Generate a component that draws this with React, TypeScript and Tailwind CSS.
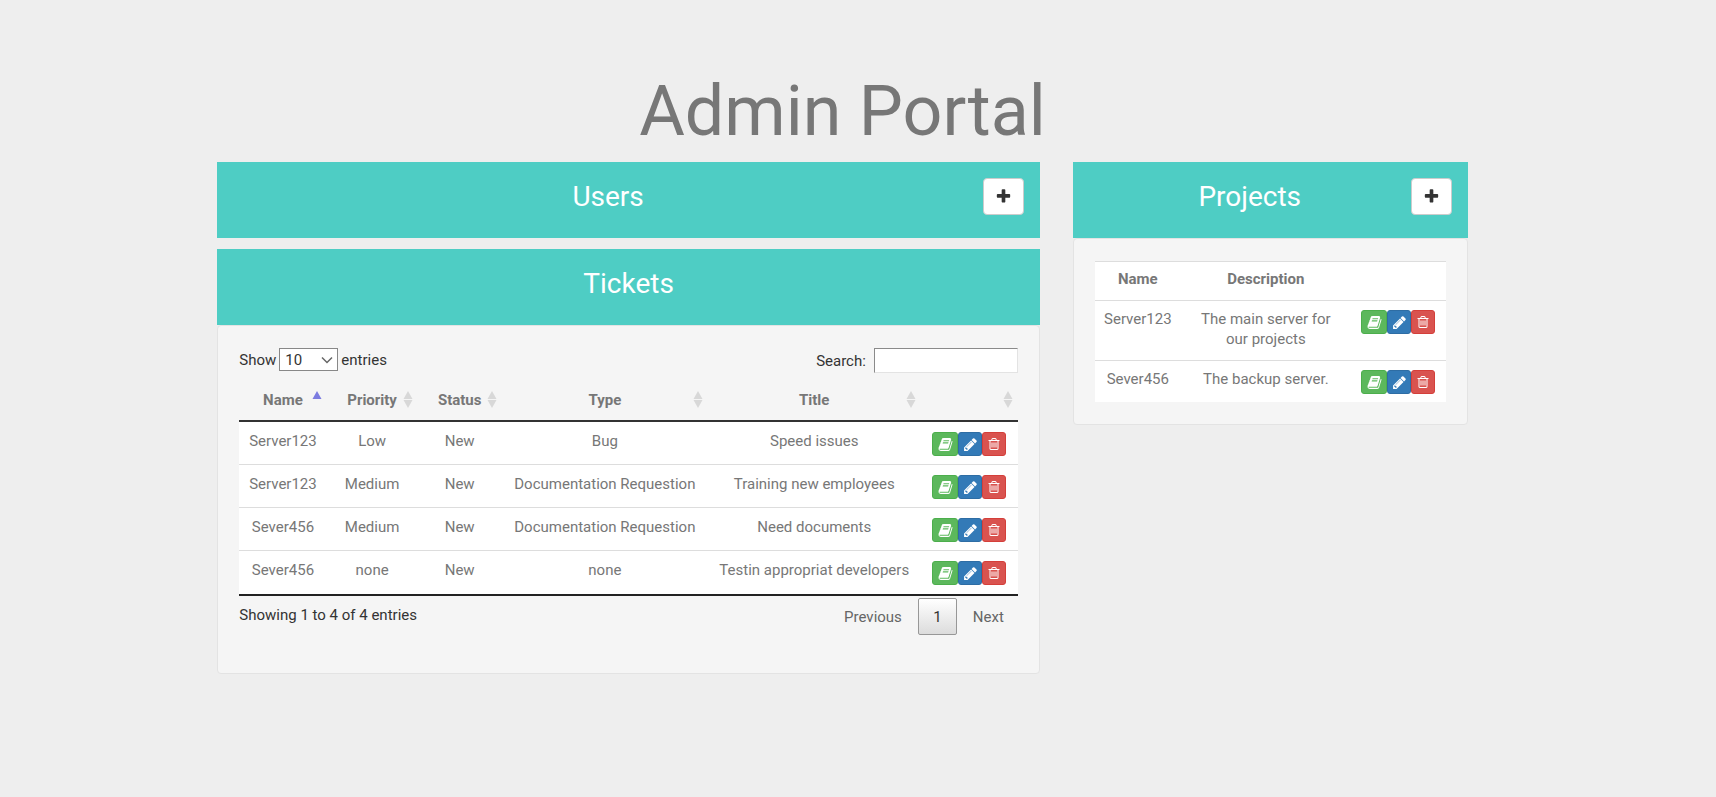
import { useState, type ReactNode } from "react";

const BOOK =
  "M1703 478q40 57 18 129l-275 906q-19 64-76.5 107.5t-122.5 43.5h-923q-77 0-148.5-53.5t-99.5-131.5q-24-67-2-127 0-4 3-27t4-37q1-8-3-21.5t-3-19.5q2-11 8-21t16.5-23.5 16.5-23.5q23-38 45-91.5t30-91.5q3-10 .5-30t-.5-28q3-11 17-28t17-23q21-36 42-92t25-90q1-9-2.5-32t.5-28q4-13 22-30.5t22-22.5q19-26 42.5-84.5t27.5-96.5q1-8-3-25.5t-2-26.5q2-8 9-18t18-23 17-21q8-12 16.5-30.5t15-35 16-36 19.5-32 26.5-23.5 36-11.5 47.5 5.5l-1 3q38-9 51-9h761q74 0 114 56t18 130l-274 906q-36 119-71.5 153.5t-128.5 34.5h-869q-27 0-38 15-11 16-1 43 24 70 144 70h923q29 0 56-15.5t35-41.5l300-987q7-22 5-57 38 15 59 43zm-1064 2q-4 13 2 22.5t20 9.5h608q13 0 25.5-9.5t16.5-22.5l21-64q4-13-2-22.5t-20-9.5h-608q-13 0-25.5 9.5t-16.5 22.5zm-83 256q-4 13 2 22.5t20 9.5h608q13 0 25.5-9.5t16.5-22.5l21-64q4-13-2-22.5t-20-9.5h-608q-13 0-25.5 9.5t-16.5 22.5z";
const PENCIL =
  "M491 1536l91-91-235-235-91 91v107h128v128h107zm523-928q0-22-22-22-10 0-17 7l-542 542q-7 7-7 17 0 22 22 22 10 0 17-7l542-542q7-7 7-17zm-54-192l416 416-832 832h-416v-416zm683 96q0 53-37 90l-166 166-416-416 166-165q36-38 90-38 53 0 91 38l235 234q37 39 37 91z";
const TRASH =
  "M704 736v576q0 14-9 23t-23 9h-64q-14 0-23-9t-9-23v-576q0-14 9-23t23-9h64q14 0 23 9t9 23zm256 0v576q0 14-9 23t-23 9h-64q-14 0-23-9t-9-23v-576q0-14 9-23t23-9h64q14 0 23 9t9 23zm256 0v576q0 14-9 23t-23 9h-64q-14 0-23-9t-9-23v-576q0-14 9-23t23-9h64q14 0 23 9t9 23zm128 724v-948h-896v948q0 22 7 40.5t14.5 27 10.5 8.5h832q3 0 10.5-8.5t14.5-27 7-40.5zm-672-1076h448l-48-117q-7-9-17-11h-317q-10 2-17 11zm928 32v64q0 14-9 23t-23 9h-96v948q0 83-47 143.5t-113 60.5h-832q-66 0-113-58.5t-47-141.5v-952h-96q-14 0-23-9t-9-23v-64q0-14 9-23t23-9h309l70-167q15-37 54-63t79-26h320q40 0 79 26t54 63l70 167h309q14 0 23 9t9 23z";
const PLUS =
  "M1600 736v192q0 40-28 68t-68 28h-416v416q0 40-28 68t-68 28h-192q-40 0-68-28t-28-68v-416h-416q-40 0-68-28t-28-68v-192q0-40 28-68t68-28h416v-416q0-40 28-68t68-28h192q40 0 68 28t28 68v416h416q40 0 68 28t28 68z";

function Icon({ d, className }: { d: string; className: string }) {
  return (
    <svg viewBox="0 0 1792 1792" className={className} fill="currentColor" aria-hidden="true">
      <path d={d} />
    </svg>
  );
}

function Actions({ name }: { name: string }) {
  return (
    <div className="flex justify-center">
      <button
        type="button"
        aria-label={`View ${name}`}
        className="flex h-6 w-[26px] items-center justify-center rounded-[3px] border border-[#4cae4c] bg-[#5cb85c] text-white"
      >
        <Icon d={BOOK} className="size-[15px]" />
      </button>
      <button
        type="button"
        aria-label={`Edit ${name}`}
        className="flex h-6 w-6 items-center justify-center rounded-[3px] border border-[#2e6da4] bg-[#337ab7] text-white"
      >
        <Icon d={PENCIL} className="size-[15px]" />
      </button>
      <button
        type="button"
        aria-label={`Delete ${name}`}
        className="flex h-6 w-6 items-center justify-center rounded-[3px] border border-[#d43f3a] bg-[#d9534f] text-white"
      >
        <Icon d={TRASH} className="size-3.5" />
      </button>
    </div>
  );
}

function PanelHeader({ title, addLabel }: { title: string; addLabel?: string }) {
  return (
    <div className="flex h-[76px] items-start bg-[#4ecdc4] px-4 pt-4">
      <h2 className="flex-1 text-center text-[28px] leading-[38px] font-normal text-white">{title}</h2>
      {addLabel && (
        <button
          type="button"
          aria-label={addLabel}
          className="flex h-[37px] w-[41px] items-center justify-center rounded border border-[#ccc] bg-white text-[#333]"
        >
          <Icon d={PLUS} className="size-[17px]" />
        </button>
      )}
    </div>
  );
}

function PanelBody({ children }: { children: ReactNode }) {
  return <div className="rounded border border-[#e3e3e3] bg-[#f5f5f5] px-[21px]">{children}</div>;
}

function SortMark({ active }: { active: boolean }) {
  return (
    <svg viewBox="0 0 10 17" className="absolute top-2 right-[5px] h-[17px] w-2.5" aria-hidden="true">
      <path d="M5 0 9.5 8h-9z" fill={active ? "#7c7ce0" : "#d8d8d8"} />
      {!active && <path d="M5 17 9.5 9h-9z" fill="#d8d8d8" />}
    </svg>
  );
}

const columns = [
  { label: "Name", width: "w-[11.2%]" },
  { label: "Priority", width: "w-[11.7%]" },
  { label: "Status", width: "w-[10.8%]" },
  { label: "Type", width: "w-[26.5%]" },
  { label: "Title", width: "w-[27.3%]" },
  { label: "", width: "w-[12.5%]" },
];

const tickets = [
  ["Server123", "Low", "New", "Bug", "Speed issues"],
  ["Server123", "Medium", "New", "Documentation Requestion", "Training new employees"],
  ["Sever456", "Medium", "New", "Documentation Requestion", "Need documents"],
  ["Sever456", "none", "New", "none", "Testin appropriat developers"],
];

const projects = [
  ["Server123", "The main server for our projects"],
  ["Sever456", "The backup server."],
];

export default function App() {
  const [size, setSize] = useState("10");
  const [query, setQuery] = useState("");
  const rows = tickets.filter((t) => t.join(" ").toLowerCase().includes(query.toLowerCase()));

  return (
    <div className="flex min-h-screen justify-center bg-[#eee] pr-[31px] font-['Roboto',sans-serif] text-[15px] leading-5 text-[#777]">
      <main className="w-[74.2%] pb-16">
        <h1 className="pt-[70px] pb-2.5 text-center text-[70px] leading-[82px] font-normal">Admin Portal</h1>
        <div className="grid grid-cols-[823fr_395fr] items-start gap-[33px]">
          <div>
            <section>
              <PanelHeader title="Users" addLabel="Add user" />
            </section>
            <section className="mt-[11px]">
              <PanelHeader title="Tickets" />
              <PanelBody>
                <div className="flex items-start justify-between pt-[22px] text-[#333]">
                  <label className="flex items-center gap-[3px]">
                    Show
                    <span className="relative flex items-center">
                      <select
                        value={size}
                        onChange={(e) => setSize(e.target.value)}
                        className="h-[23px] w-[59px] appearance-none border border-[#888] bg-white pl-[5px]"
                      >
                        <option>10</option>
                        <option>25</option>
                        <option>50</option>
                        <option>100</option>
                      </select>
                      <svg
                        viewBox="0 0 12 8"
                        className="pointer-events-none absolute right-[5px] h-2 w-3"
                        fill="none"
                        stroke="#666"
                        strokeWidth="1.5"
                        aria-hidden="true"
                      >
                        <path d="M1 1.5 6 6.5 11 1.5" />
                      </svg>
                    </span>
                    entries
                  </label>
                  <label className="flex items-center gap-2">
                    Search:
                    <input
                      type="search"
                      value={query}
                      onChange={(e) => setQuery(e.target.value)}
                      className="h-[25px] w-36 border border-t-[#8a8a8a] border-r-[#e3e3e3] border-b-[#e3e3e3] border-l-[#8a8a8a] bg-white px-1 outline-none"
                    />
                  </label>
                </div>
                <table className="mt-2.5 w-full table-fixed border-separate border-spacing-0 border-b-2 border-[#222] text-center">
                  <thead>
                    <tr className="h-[39px]">
                      {columns.map((c, i) => (
                        <th
                          key={i}
                          scope="col"
                          className={`relative border-b-2 border-[#333] pt-[7px] pb-2.5 align-top font-bold ${c.width}`}
                        >
                          {c.label}
                          <SortMark active={i === 0} />
                        </th>
                      ))}
                    </tr>
                  </thead>
                  <tbody>
                    {rows.map((t, r) => (
                      <tr key={r} className="group h-[43px] bg-white">
                        {t.map((v, i) => (
                          <td
                            key={i}
                            className="border-b border-[#ddd] pt-[9px] align-top whitespace-nowrap group-last:border-b-0"
                          >
                            {v}
                          </td>
                        ))}
                        <td className="border-b border-[#ddd] pt-2.5 align-top group-last:border-b-0">
                          <Actions name={t[4]} />
                        </td>
                      </tr>
                    ))}
                  </tbody>
                </table>
                <div className="flex items-start justify-between pt-0.5 pb-[38px]">
                  <p className="pt-[7px] text-[#333]">Showing 1 to 4 of 4 entries</p>
                  <nav aria-label="Pages" className="flex items-center text-[#666]">
                    <button type="button" className="h-[37px] px-4">
                      Previous
                    </button>
                    <button
                      type="button"
                      aria-current="page"
                      className="h-[37px] w-[39px] rounded-xs border border-[#979797] bg-linear-to-b from-white to-[#dcdcdc] text-[#333]"
                    >
                      1
                    </button>
                    <button type="button" className="h-[37px] pr-3.5 pl-4">
                      Next
                    </button>
                  </nav>
                </div>
              </PanelBody>
            </section>
          </div>
          <section>
            <PanelHeader title="Projects" addLabel="Add project" />
            <PanelBody>
              <table className="my-[22px] w-full table-fixed border-separate border-spacing-0 bg-white text-center">
                <thead>
                  <tr className="h-[39px]">
                    <th scope="col" className="w-[24.5%] border-t border-[#ddd] pt-[7px] align-top font-bold">
                      Name
                    </th>
                    <th scope="col" className="w-[48.5%] border-t border-[#ddd] pt-[7px] align-top font-bold">
                      Description
                    </th>
                    <th scope="col" aria-label="Actions" className="w-[27%] border-t border-[#ddd]" />
                  </tr>
                </thead>
                <tbody>
                  {projects.map(([name, text]) => (
                    <tr key={name}>
                      <td className="border-t border-[#ddd] pt-2 align-top">{name}</td>
                      <td className="border-t border-[#ddd] px-4 pt-2 pb-[11px] align-top">{text}</td>
                      <td className="border-t border-[#ddd] pt-[9px] pb-2 align-top">
                        <Actions name={name} />
                      </td>
                    </tr>
                  ))}
                </tbody>
              </table>
            </PanelBody>
          </section>
        </div>
      </main>
    </div>
  );
}
